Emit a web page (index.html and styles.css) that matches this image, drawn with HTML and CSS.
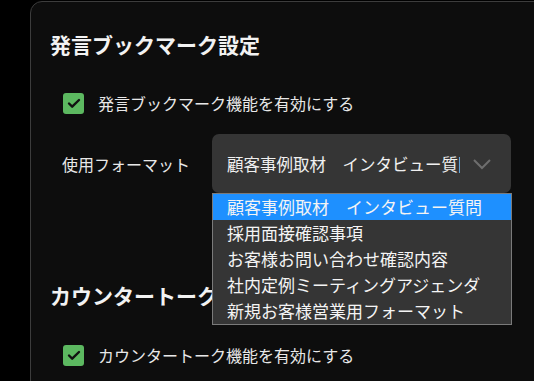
FILE: index.html
```html
<!DOCTYPE html>
<html lang="ja">
<head>
    <meta charset="UTF-8">
    <meta name="viewport" content="width=device-width, initial-scale=1.0">
    <title>設定</title>
    <link rel="stylesheet" href="styles.css">
</head>
<body>
    <div class="panel">
        <section class="section">
            <h2 class="section-title">発言ブックマーク設定</h2>
            <label class="check-row">
                <span class="checkbox"><svg viewBox="0 0 20 20" width="20" height="20"><path d="M5 10.5l3.2 3.2L15 7" fill="none" stroke="#111" stroke-width="2.4" stroke-linecap="round" stroke-linejoin="round"/></svg></span>
                <span>発言ブックマーク機能を有効にする</span>
            </label>
            <div class="format-row">
                <span class="format-label">使用フォーマット</span>
                <div class="select-wrap">
                    <div class="select-box">
                        <span class="select-text">顧客事例取材　インタビュー質問</span>
                        <svg class="chevron" viewBox="0 0 20 12" width="20" height="12"><path d="M2 2l8 8 8-8" fill="none" stroke="#6e6e6e" stroke-width="2"/></svg>
                    </div>
                    <ul class="dropdown">
                        <li class="active">顧客事例取材　インタビュー質問</li>
                        <li>採用面接確認事項</li>
                        <li>お客様お問い合わせ確認内容</li>
                        <li>社内定例ミーティングアジェンダ</li>
                        <li>新規お客様営業用フォーマット</li>
                    </ul>
                </div>
            </div>
        </section>
        <section class="section second">
            <h2 class="section-title">カウンタートーク設定</h2>
            <label class="check-row">
                <span class="checkbox"><svg viewBox="0 0 20 20" width="20" height="20"><path d="M5 10.5l3.2 3.2L15 7" fill="none" stroke="#111" stroke-width="2.4" stroke-linecap="round" stroke-linejoin="round"/></svg></span>
                <span>カウンタートーク機能を有効にする</span>
            </label>
        </section>
    </div>
</body>
</html>
```

FILE: styles.css
```css
body {
    margin: 0;
    padding: 1px 0 0 30px;
    background-color: #000;
    font-family: "Noto Sans CJK JP", "Noto Sans", sans-serif;
    color: #e8e8e8;
    overflow: hidden;
    height: 380px;
}

.panel {
    width: 540px;
    height: 420px;
    box-sizing: border-box;
    background-color: #0d0d0d;
    border: 1px solid #3c3c3c;
    border-radius: 12px;
    padding: 27px 0 0 19px;
}

.section-title {
    margin: 0;
    font-size: 21px;
    line-height: 30px;
    font-weight: bold;
    color: #f2f2f2;
}

.check-row {
    display: flex;
    align-items: center;
    gap: 14px;
    height: 24px;
    margin: 32px 0 0 13px;
    font-size: 16px;
}

.checkbox {
    width: 21px;
    height: 21px;
    border-radius: 3px;
    background-color: #5cb860;
    display: flex;
    align-items: center;
    justify-content: center;
}

.format-row {
    display: flex;
    align-items: center;
    margin: 19px 0 0 12px;
}

.format-label {
    width: 150px;
    font-size: 16px;
}

.select-wrap {
    position: relative;
}

.select-box {
    width: 299px;
    height: 59px;
    box-sizing: border-box;
    background-color: #353535;
    border-radius: 7px;
    display: flex;
    align-items: center;
    padding-left: 15px;
}

.select-text {
    width: 233px;
    overflow: hidden;
    white-space: nowrap;
    font-size: 16.5px;
    color: #f0f0f0;
}

.chevron {
    margin-left: 12px;
}

.dropdown {
    position: absolute;
    top: 59px;
    left: 0;
    width: 300px;
    box-sizing: border-box;
    margin: 0;
    padding: 0;
    list-style: none;
    background-color: #353535;
    border: 1px solid #7a7a7a;
    z-index: 2;
}

.dropdown li {
    height: 26px;
    line-height: 26px;
    padding-left: 14px;
    font-size: 17px;
    color: #f4f4f4;
    white-space: nowrap;
}

.dropdown li.active {
    background-color: #1e90ff;
}

.second {
    margin-top: 87px;
}

.second .check-row {
    margin-top: 33px;
}
```
